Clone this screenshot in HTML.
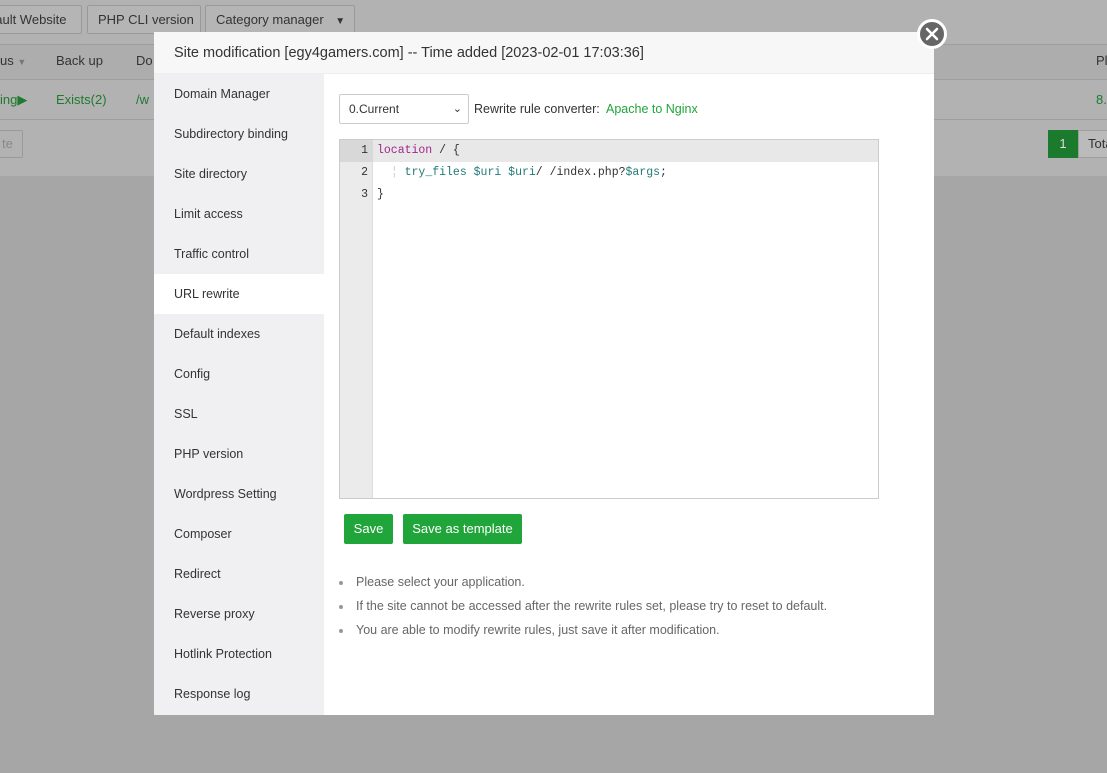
<!DOCTYPE html>
<html><head><meta charset="utf-8"><style>
*{box-sizing:border-box;margin:0;padding:0}
body{width:1107px;height:773px;overflow:hidden;font-family:"Liberation Sans",sans-serif;font-size:13px;background:#a6a6a6;position:relative;color:#333}
.top{position:absolute;left:0;top:0;width:1107px;height:176px;background:#b2b2b2}
.btn{position:absolute;top:5px;height:29px;border:1px solid #999;border-radius:2px;background:#b5b5b5;color:#333;font-size:13px;line-height:27px;padding:0 10px;white-space:nowrap;overflow:hidden}
.hdr{position:absolute;left:0;top:44px;width:1107px;height:36px;border-top:1px solid #9e9e9e;border-bottom:1px solid #9e9e9e;background:#adadad}
.row{position:absolute;left:0;top:80px;width:1107px;height:40px;border-bottom:1px solid #9e9e9e}
.t{position:absolute;font-size:13px;white-space:nowrap}
.modal{position:absolute;left:154px;top:32px;width:780px;height:683px;background:#fff}
.mh{height:42px;background:#f7f7f7;border-bottom:1px solid #eee;font-size:14.5px;line-height:42px;padding-left:20px;color:#333}
.side{position:absolute;left:0;top:42px;width:170px;height:641px;background:#f0f0f2}
.side div{height:40px;line-height:40px;padding-left:20px;font-size:12.5px;color:#333}
.side .on{background:#fff}
.close{position:absolute;left:917px;top:19px;width:30px;height:30px;border-radius:50%;background:#666;border:3px solid #fff}
.sel{position:absolute;left:185px;top:62px;width:130px;height:30px;border:1px solid #ccc;border-radius:2px;font-size:12px;line-height:28px;padding-left:9px}
.ed{position:absolute;left:185px;top:107px;width:540px;height:360px;border:1px solid #ccc;background:#fff;font-family:"Liberation Mono",monospace;font-size:11.5px}
.gut{position:absolute;left:0;top:0;width:33px;height:100%;background:#ebebeb;border-right:1px solid #ddd}
.ln{position:absolute;left:0;width:28px;text-align:right;color:#333;height:22px;line-height:22px}
.cl{position:absolute;left:37px;height:22px;line-height:22px;white-space:pre;color:#333}
.g{position:absolute;background:#20a53a;color:#fff;border-radius:2px;height:30px;line-height:30px;font-size:13px;text-align:center;top:482px}
ul{position:absolute;left:202px;top:538px;color:#666;font-size:12.5px;list-style:none}
li{height:24px;line-height:24px;position:relative}
li:before{content:"";position:absolute;left:-17px;top:11px;width:4px;height:4px;border-radius:50%;background:#999}
</style></head><body>
<div class="top"></div>
<div class="btn" style="left:-36px;width:118px">Default Website</div>
<div class="btn" style="left:87px;width:114px">PHP CLI version</div>
<div class="btn" style="left:205px;width:150px">Category manager <span style="font-size:10px;margin-left:8px">▼</span></div>
<div class="hdr"></div>
<div class="t" style="left:0;top:53px">us <span style="font-size:9px;color:#777">▼</span></div>
<div class="t" style="left:56px;top:53px">Back up</div>
<div class="t" style="left:136px;top:53px">Do</div>
<div class="t" style="left:1096px;top:53px">Pl</div>
<div class="row"></div>
<div class="t" style="left:0;top:92px;color:#1e7a2e">ing▶</div>
<div class="t" style="left:56px;top:92px;color:#1e7a2e">Exists(2)</div>
<div class="t" style="left:136px;top:92px;color:#1e7a2e">/w</div>
<div class="t" style="left:1096px;top:92px;color:#1e7a2e">8.</div>
<div style="position:absolute;left:-5px;top:130px;width:28px;height:28px;border:1px solid #999;border-radius:2px;color:#888;font-size:13px;line-height:26px;padding-left:6px">te</div>
<div style="position:absolute;left:1048px;top:130px;width:30px;height:28px;background:#1c7a2f;color:#ddd;text-align:center;line-height:28px">1</div>
<div style="position:absolute;left:1078px;top:130px;width:40px;height:28px;background:#bbb;border:1px solid #a0a0a0;line-height:26px;padding-left:9px">Tota</div>

<div class="modal">
<div class="mh">Site modification [egy4gamers.com] -- Time added [2023-02-01 17:03:36]</div>
<div class="side">
<div>Domain Manager</div><div>Subdirectory binding</div><div>Site directory</div><div>Limit access</div><div>Traffic control</div><div class="on">URL rewrite</div><div>Default indexes</div><div>Config</div><div>SSL</div><div>PHP version</div><div>Wordpress Setting</div><div>Composer</div><div>Redirect</div><div>Reverse proxy</div><div>Hotlink Protection</div><div>Response log</div>
</div>
<div class="sel">0.Current<span style="position:absolute;right:6px;top:0;font-size:11px">&#8964;</span></div>
<div style="position:absolute;left:320px;top:70px;font-size:12.5px">Rewrite rule converter:&nbsp; <span style="color:#20a53a">Apache to Nginx</span></div>
<div class="ed">
<div style="position:absolute;left:0;top:0;width:100%;height:22px;background:#e8e8e8"></div>
<div class="gut"></div>
<div style="position:absolute;left:0;top:0;width:33px;height:22px;background:#d8d8d8"></div>
<div class="ln" style="top:0">1</div><div class="ln" style="top:22px">2</div><div class="ln" style="top:44px">3</div>
<div class="cl" style="top:0"><span style="color:#a0278e">location</span> / {</div>
<div class="cl" style="top:22px">  <span style="color:#ccc">¦</span> <span style="color:#227a7a">try_files</span> <span style="color:#227a7a">$uri</span> <span style="color:#227a7a">$uri</span>/ /index.php?<span style="color:#227a7a">$args</span>;</div>
<div class="cl" style="top:44px">}</div>
</div>
<div class="g" style="left:190px;width:49px">Save</div>
<div class="g" style="left:249px;width:119px">Save as template</div>
<ul><li>Please select your application.</li><li>If the site cannot be accessed after the rewrite rules set, please try to reset to default.</li><li>You are able to modify rewrite rules, just save it after modification.</li></ul>
</div>
<div class="close"><svg width="24" height="24" viewBox="0 0 24 24" style="display:block"><path d="M7 7L17 17M17 7L7 17" stroke="#fff" stroke-width="2.5" stroke-linecap="round"/></svg></div>
</body></html>
